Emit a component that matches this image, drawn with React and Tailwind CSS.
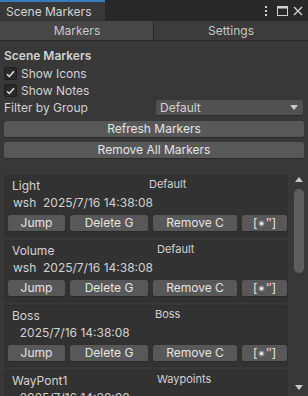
import React from "react";

const items = [
  { name: "Light", group: "Default", author: "wsh", gw: "w-[137px]" },
  { name: "Volume", group: "Default", author: "wsh", gw: "w-[145px]" },
  { name: "Boss", group: "Boss", author: "", gw: "w-[143px]" },
  { name: "WayPont1", group: "Waypoints", author: "", gw: "w-[145px]" },
];

function Check() {
  return (
    <div className="w-[13px] h-[13px] rounded-[2px] bg-[#2a2a2a] border border-[#1e1e1e] flex items-center justify-center">
      <svg width="9" height="8" viewBox="0 0 9 8">
        <path d="M1 4.2 L3.4 6.5 L8 1.2" fill="none" stroke="#e0e0e0" strokeWidth="1.5" />
      </svg>
    </div>
  );
}

function Btn({ children, className = "" }) {
  return (
    <div
      className={
        "h-[17px] rounded-[3px] bg-[#585858] border-b border-[#2b2b2b] text-[#e4e4e4] flex items-center justify-center leading-none " +
        className
      }
    >
      {children}
    </div>
  );
}

function Card({ it }) {
  return (
    <div className="h-[62px] shrink-0 bg-[#323232] border border-[#2f2f2f] rounded-[2px] flex flex-col">
      <div className="h-[16px] mt-[2px] flex items-center pl-[7px]">
        <div className={it.gw + " shrink-0"}>{it.name}</div>
        <div className="text-[11px] -mt-[3px]">{it.group}</div>
      </div>
      <div className="h-[17px] flex items-center pl-[8px] whitespace-pre">
        {it.author + "  2025/7/16 14:38:08"}
      </div>
      <div className="mt-[4px] flex gap-[5px] pl-[3px]">
        <Btn className="w-[57px]">Jump</Btn>
        <Btn className="w-[78px]">Delete G</Btn>
        <Btn className="w-[84px]">Remove C</Btn>
        <Btn className="w-[45px]">
          <span className="flex items-center">
            [
            <svg width="7" height="7" viewBox="0 0 7 7" className="mx-[1px]">
              <circle cx="3.5" cy="3.5" r="3" fill="#8a8a8a" />
              <circle cx="3.5" cy="3.5" r="1.6" fill="#f0f0f0" />
            </svg>
            ″]
          </span>
        </Btn>
      </div>
    </div>
  );
}

export default function App() {
  return (
    <div
      className="w-[308px] h-[396px] bg-[#383838] overflow-hidden flex flex-col text-[12px] text-[#d2d2d2]"
      style={{ fontFamily: "Inter, 'Noto Sans', sans-serif" }}
    >
      {/* title bar */}
      <div className="h-[21px] shrink-0 bg-[#282828] flex items-stretch">
        <div className="w-[105px] bg-[#383838] border-t-2 border-[#3a79bb] flex items-center pl-[6px] text-[12px] pt-[1px]">
          Scene Markers
        </div>
        <div className="flex-1" />
        <div className="flex items-center pr-[5px] pt-[1px]">
          <svg width="4" height="12" viewBox="0 0 4 12">
            <rect x="1" y="1" width="2" height="2" fill="#d0d0d0" />
            <rect x="1" y="5" width="2" height="2" fill="#d0d0d0" />
            <rect x="1" y="9" width="2" height="2" fill="#d0d0d0" />
          </svg>
          <svg width="11" height="10" viewBox="0 0 11 10" className="ml-[9px]">
            <rect x="0.5" y="0.5" width="10" height="9" fill="none" stroke="#d0d0d0" strokeWidth="1" />
            <rect x="0.5" y="0.5" width="10" height="2" fill="#d0d0d0" />
          </svg>
          <svg width="10" height="10" viewBox="0 0 10 10" className="ml-[5px]">
            <path d="M1 1 L9 9 M9 1 L1 9" stroke="#d0d0d0" strokeWidth="1.4" />
          </svg>
        </div>
      </div>

      {/* tabs */}
      <div className="h-[20px] shrink-0 flex border-b border-[#2a2a2a]">
        <div className="w-[153px] bg-[#474747] flex items-center justify-center pl-[1px] text-[#c8c8c8]">
          Markers
        </div>
        <div className="w-[1px] bg-[#2a2a2a]" />
        <div className="flex-1 bg-[#3c3c3c] flex items-center justify-center text-[#c8c8c8]">
          Settings
        </div>
      </div>

      {/* content */}
      <div className="px-[4px] flex flex-col flex-1 min-h-0">
        <div className="h-[16px] mt-[7px] flex items-center font-semibold">Scene Markers</div>
        <div className="h-[17px] flex items-center gap-[4px] mt-[1px]">
          <Check />
          <span>Show Icons</span>
        </div>
        <div className="h-[17px] flex items-center gap-[4px]">
          <Check />
          <span>Show Notes</span>
        </div>
        <div className="h-[18px] flex items-center">
          <div className="w-[152px] shrink-0">Filter by Group</div>
          <div className="flex-1 h-[16px] rounded-[3px] bg-[#515151] border-b border-[#2b2b2b] flex items-center pl-[4px] pr-[5px] mr-[1px]">
            <span className="flex-1">Default</span>
            <svg width="8" height="5" viewBox="0 0 8 5">
              <path d="M0 0 L8 0 L4 5 Z" fill="#c8c8c8" />
            </svg>
          </div>
        </div>
        <Btn className="mt-[4px]">Refresh Markers</Btn>
        <Btn className="mt-[4px]">Remove All Markers</Btn>

        {/* list */}
        <div className="mt-[16px] flex flex-1 min-h-0">
          <div className="w-[287px] flex flex-col gap-[3px] overflow-hidden">
            {items.map((it) => (
              <Card key={it.name} it={it} />
            ))}
          </div>
          <div className="ml-[6px] w-[10px] flex flex-col items-center">
            <svg width="8" height="5" viewBox="0 0 8 5" className="mt-[2px]">
              <path d="M0 5 L8 5 L4 0 Z" fill="#c8c8c8" />
            </svg>
            <div className="mt-[7px] w-[10px] h-[84px] rounded-full bg-[#5e5e5e]" />
            <div className="flex-1" />
            <svg width="8" height="5" viewBox="0 0 8 5" className="mb-[6px]">
              <path d="M0 0 L8 0 L4 5 Z" fill="#c8c8c8" />
            </svg>
          </div>
        </div>
      </div>
    </div>
  );
}
